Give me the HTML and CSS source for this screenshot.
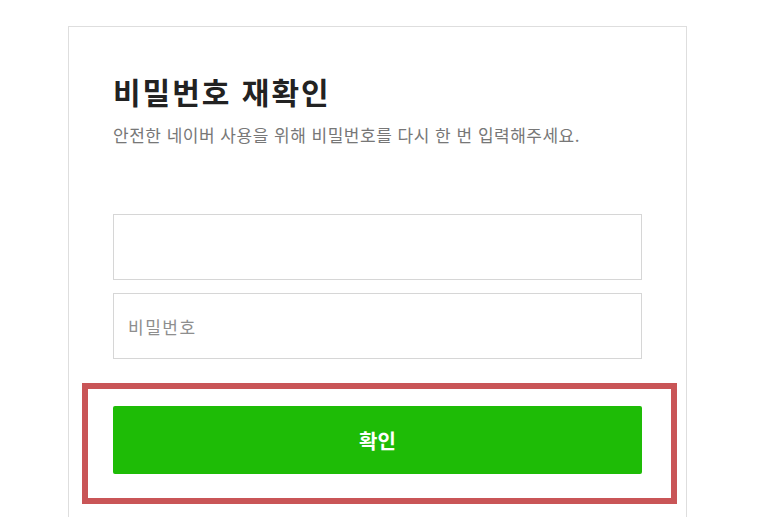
FILE: index.html
```html
<!DOCTYPE html>
<html lang="ko">
<head>
  <meta charset="UTF-8" />
  <meta name="viewport" content="width=device-width, initial-scale=1.0"/>
  <title>비밀번호 재확인</title>
  <link rel="stylesheet" href="styles.css">
</head>
<body>
  <div class="card">
    <h1 class="title">비밀번호 재확인</h1>
    <p class="desc">안전한 네이버 사용을 위해 비밀번호를 다시 한 번 입력해주세요.</p>

    <div class="fields">
      <input type="text" class="field">
      <input type="password" class="field" placeholder="비밀번호">
    </div>

    <div class="highlight">
      <button class="confirm-btn">확인</button>
    </div>
  </div>
</body>
</html>
```

FILE: styles.css
```css
html, body {
  overflow: hidden;
}
body {
  margin: 0;
  padding: 26px 0 0 68px;
  background-color: #fff;
  font-family: "Noto Sans CJK KR", "Noto Sans", sans-serif;
}
.card {
  box-sizing: border-box;
  width: 619px;
  height: calc(100vh - 26px);
  padding: 45px 44px 0 44px;
  border: 1px solid #dedede;
  border-bottom: none;
}
.title {
  margin: 0;
  font-size: 30px;
  line-height: 38px;
  font-weight: bold;
  letter-spacing: 2px;
  color: #222;
}
.desc {
  margin: 13px 0 0;
  font-size: 17px;
  line-height: 24px;
  color: #777;
  letter-spacing: 0.5px;
}
.fields {
  display: flex;
  flex-direction: column;
  gap: 13px;
  margin-top: 67px;
}
.field {
  box-sizing: border-box;
  width: 100%;
  height: 66px;
  padding: 0 14px;
  border: 1px solid #d6d6d6;
  border-radius: 0;
  font-family: inherit;
  font-size: 17px;
  letter-spacing: 1.5px;
  color: #333;
  outline: none;
}
.field::placeholder {
  color: #8e8e8e;
}
.highlight {
  margin: 24px -35px 0 -31px;
  padding: 17px 29px 24px 25px;
  border: 6px solid #c95557;
}
.confirm-btn {
  display: block;
  width: 100%;
  height: 68px;
  border: none;
  border-radius: 2px;
  background-color: #1ebc06;
  color: #fff;
  font-family: inherit;
  font-size: 20px;
  font-weight: bold;
  cursor: pointer;
}
```
